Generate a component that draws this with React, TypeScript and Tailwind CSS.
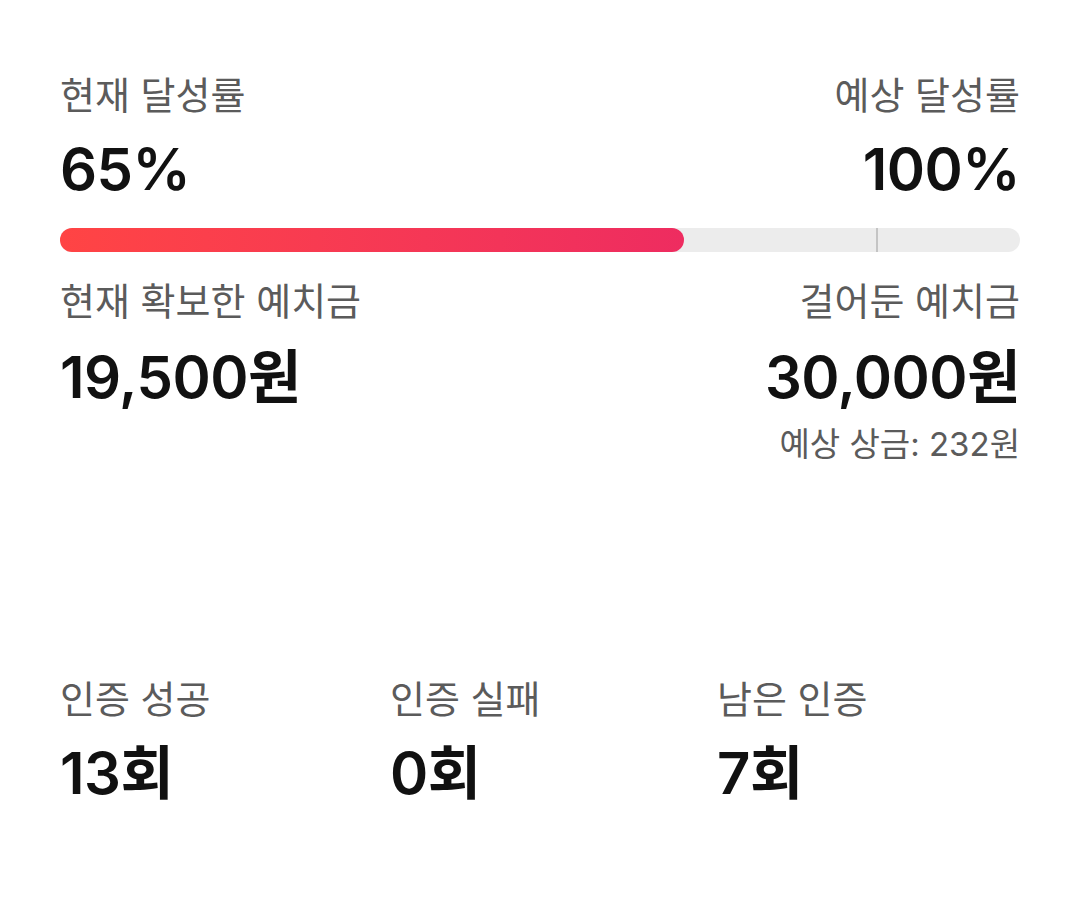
const font = { fontFamily: '"Inter", "Noto Sans CJK KR", sans-serif' };

type Stat = { label: string; value: string };

const stats: Stat[] = [
  { label: "인증 성공", value: "13회" },
  { label: "인증 실패", value: "0회" },
  { label: "남은 인증", value: "7회" },
];

const Label = ({ children }: { children: React.ReactNode }) => (
  <p className="text-[38px] leading-[46px] text-[#5b5b5b]">{children}</p>
);

const Value = ({ children }: { children: React.ReactNode }) => (
  <p className="text-[58px] leading-[66px] font-semibold text-[#111111] tracking-[-0.5px]">{children}</p>
);

export default function App() {
  const current = 65;
  const expected = 85;
  return (
    <div className="w-[1080px] h-[898px] bg-white px-[60px] pt-[72px]" style={font}>
      <div className="flex justify-between">
        <div className="flex flex-col gap-[18px]">
          <Label>현재 달성률</Label>
          <Value>65%</Value>
        </div>
        <div className="flex flex-col items-end gap-[18px]">
          <Label>예상 달성률</Label>
          <Value>100%</Value>
        </div>
      </div>

      <div className="relative mt-[26px] h-[24px] w-full rounded-full bg-[#ececec]">
        <div
          className="h-full rounded-full bg-gradient-to-r from-[#ff4444] to-[#ee2c60]"
          style={{ width: `${current}%` }}
        />
        <div
          className="absolute top-0 h-full w-[2px] bg-[#c4c4c4]"
          style={{ left: `${expected}%` }}
        />
      </div>

      <div className="mt-[26px] flex justify-between">
        <div className="flex flex-col gap-[20px]">
          <Label>현재 확보한 예치금</Label>
          <Value>19,500원</Value>
        </div>
        <div className="flex flex-col items-end gap-[20px]">
          <Label>걸어둔 예치금</Label>
          <Value>30,000원</Value>
          <p className="mt-[-6px] text-[33px] leading-[40px] text-[#5b5b5b]">예상 상금: 232원</p>
        </div>
      </div>

      <div className="mt-[212px] grid grid-cols-[330px_327px_1fr]">
        {stats.map((s) => (
          <div key={s.label} className="flex flex-col gap-[18px]">
            <Label>{s.label}</Label>
            <Value>{s.value}</Value>
          </div>
        ))}
      </div>
    </div>
  );
}
